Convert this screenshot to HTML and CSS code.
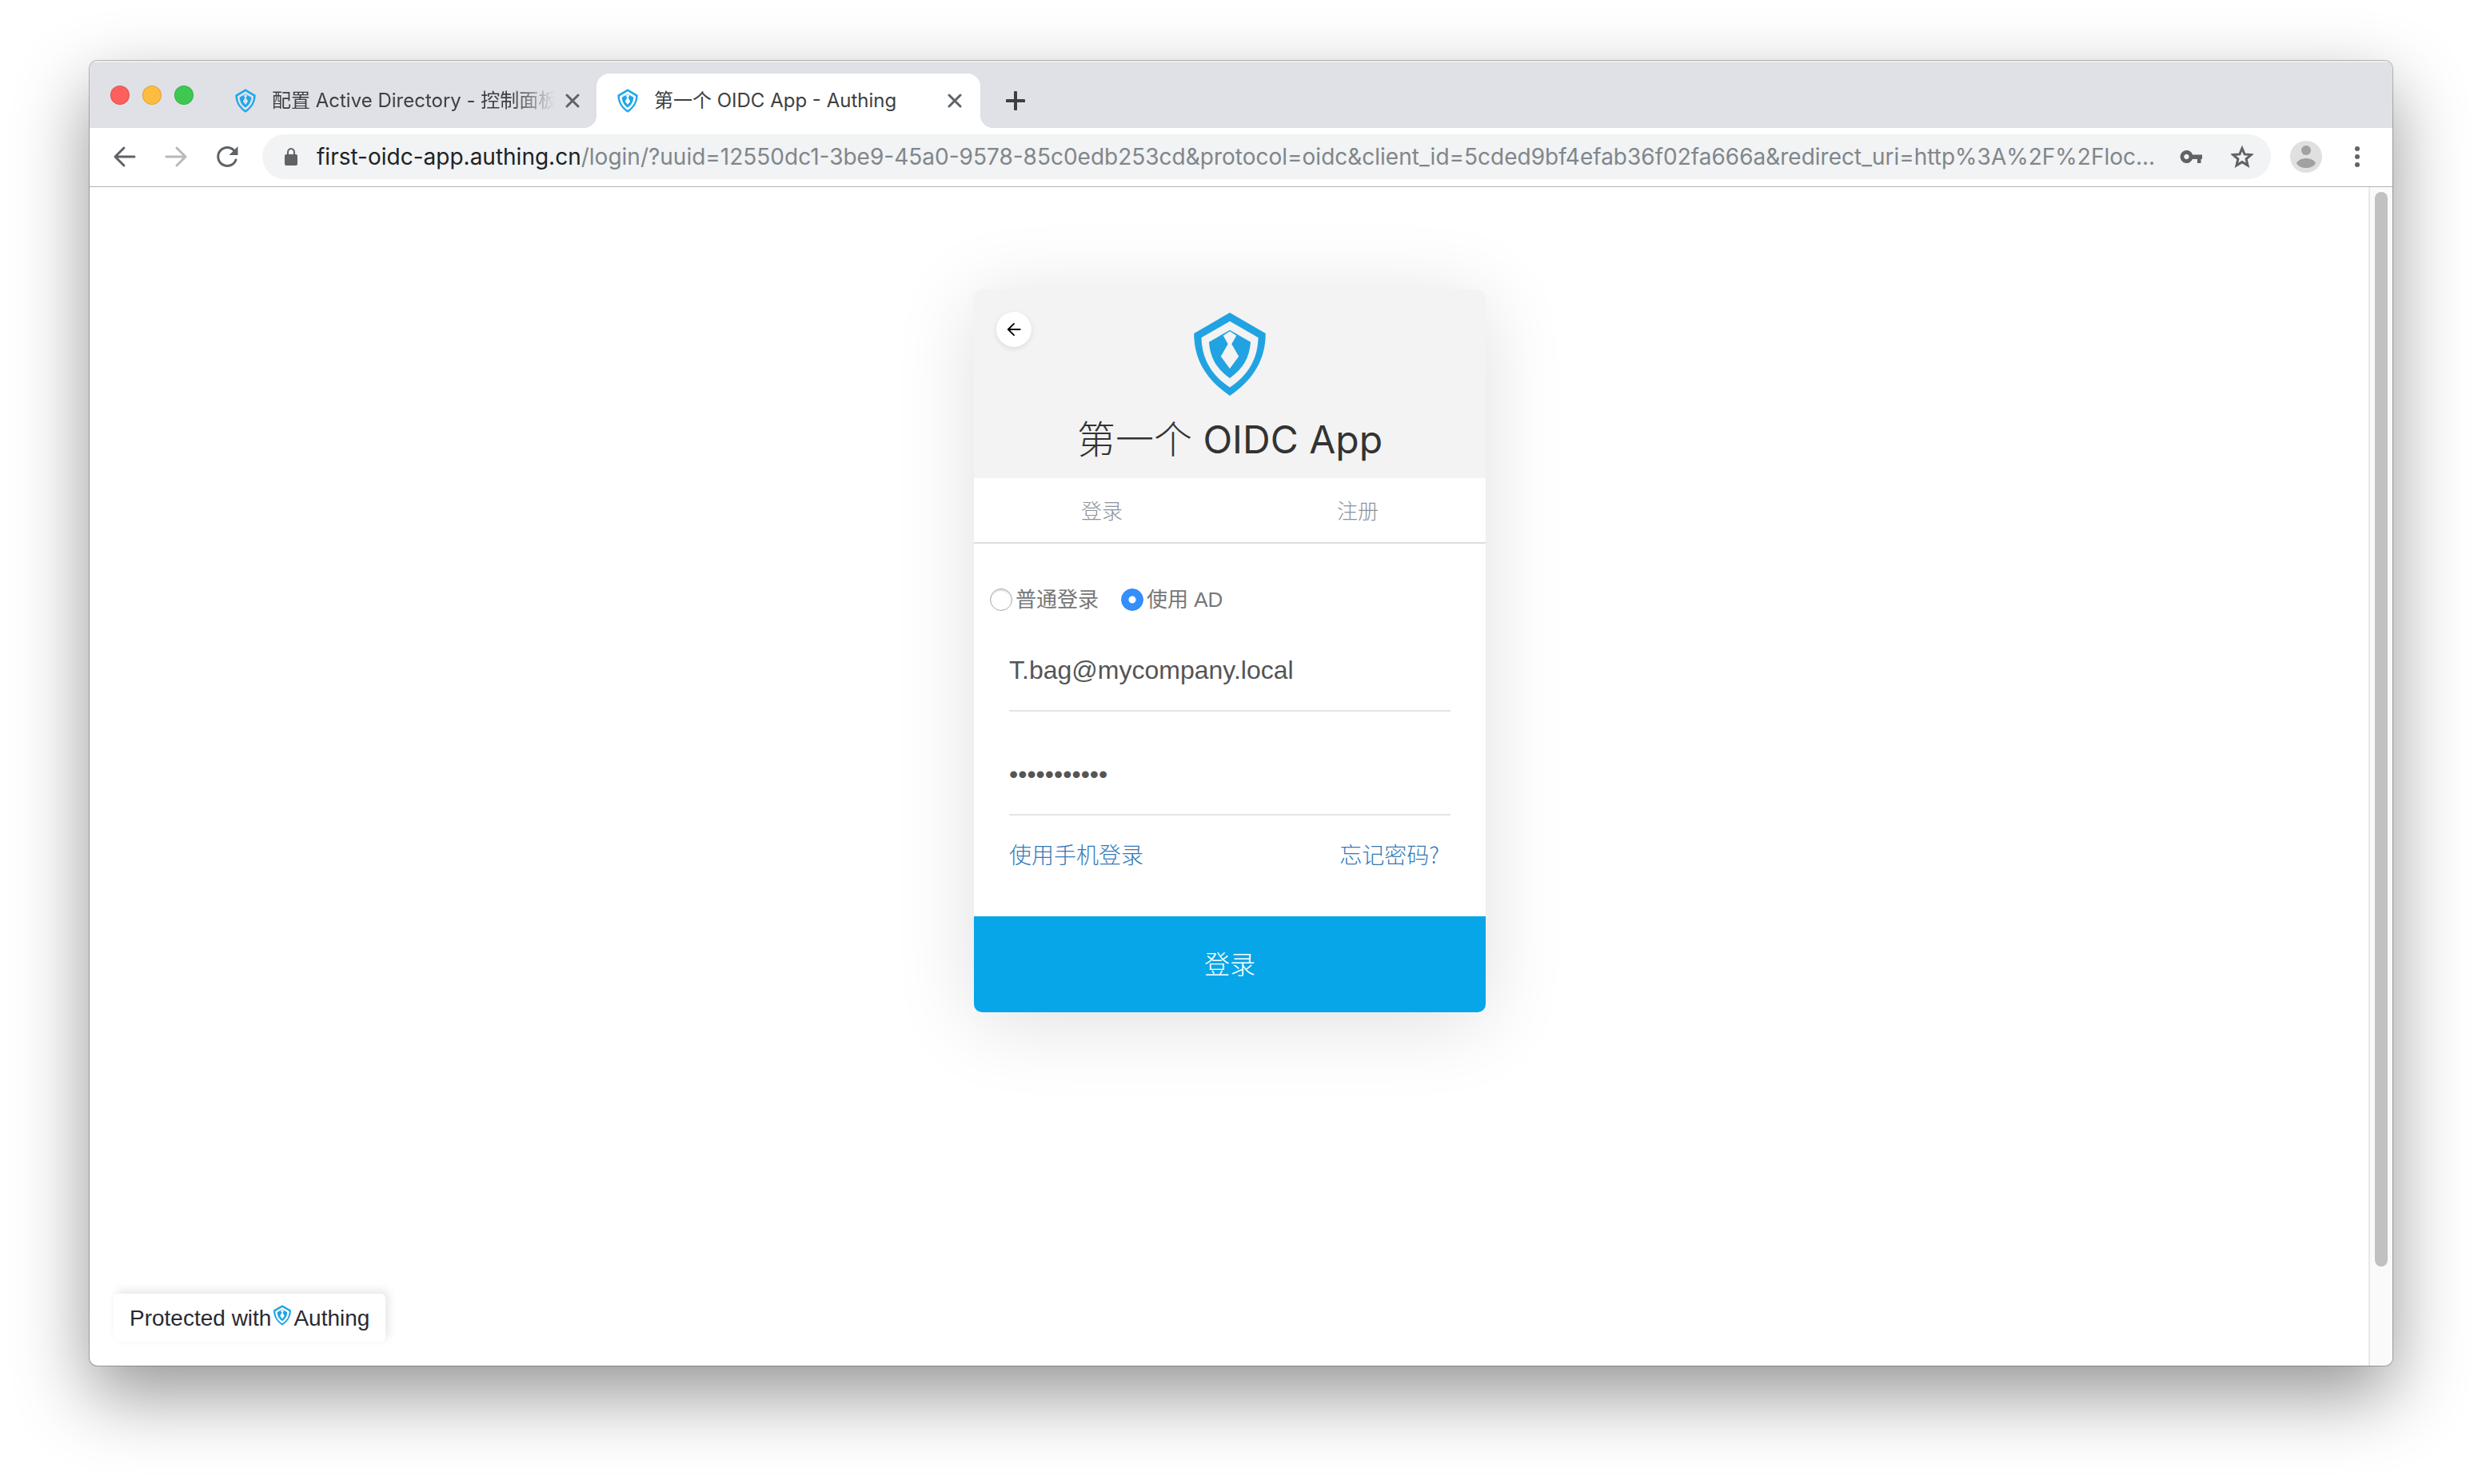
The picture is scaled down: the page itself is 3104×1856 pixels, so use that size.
FILE: index.html
```html
<!DOCTYPE html>
<html lang="zh-CN">
<head>
<meta charset="utf-8">
<title>第一个 OIDC App - Authing</title>
<link rel="stylesheet" href="styles.css">
</head>
<body>
<svg class="sprite" aria-hidden="true">
  <symbol id="shield" viewBox="60 28 278 322">
    <path fill-rule="evenodd" d="M199 31 335 110C335 210 288 286 199 347 110 286 63 210 63 110ZM199 64 91 126C93 206 128 268 199 315 270 268 305 206 307 126ZM199 97 278 143C274 202 250 244 199 280 148 244 124 202 120 143ZM199 102 174 118 192 150 165 197 199 244 233 197 206 150 224 118Z"/>
  </symbol>
</svg>
<div class="window">
  <header class="tabstrip">
    <div class="lights"><span class="light red"></span><span class="light amber"></span><span class="light green"></span></div>
    <div class="tab">
      <svg class="favicon"><use href="#shield"/></svg>
      <span class="tab-title faded">配置 Active Directory - 控制面板</span>
      <button class="tab-close" aria-label="关闭标签页"><svg viewBox="0 0 18 18"><path d="M2 2 16 16M16 2 2 16"/></svg></button>
    </div>
    <div class="tab active">
      <svg class="favicon"><use href="#shield"/></svg>
      <span class="tab-title">第一个 OIDC App - Authing</span>
      <button class="tab-close" aria-label="关闭标签页"><svg viewBox="0 0 18 18"><path d="M2 2 16 16M16 2 2 16"/></svg></button>
    </div>
    <button class="new-tab" aria-label="新标签页"><svg viewBox="0 0 24 24"><path d="M12 1.500V22.500M1.500 12H22.500"/></svg></button>
  </header>
  <nav class="toolbar">
    <button class="tool" aria-label="后退"><svg viewBox="0 0 32 32"><path d="M28 16H4.500M15 5 4 16 15 27"/></svg></button>
    <button class="tool dim" aria-label="前进"><svg viewBox="0 0 32 32"><path d="M4 16H27.500M17 5 28 16 17 27"/></svg></button>
    <button class="tool" aria-label="重新加载"><svg viewBox="0 0 32 32"><path d="M27 20A11.500 11.500 0 1 1 25 8.500"/><path class="solid" d="M29.500 3V14H18.500Z"/></svg></button>
    <div class="omnibox">
      <svg class="lock" viewBox="0 0 16 22"><path fill-rule="evenodd" d="M2 8H3V5.500A5 5.500 0 0 1 13 5.500V8H14A2 2 0 0 1 16 10V20A2 2 0 0 1 14 22H2A2 2 0 0 1 0 20V10A2 2 0 0 1 2 8ZM5 8H11V5.500A3 3.500 0 0 0 5 5.500Z"/></svg>
      <div class="url"><span class="host">first-oidc-app.authing.cn</span>/login/?uuid=12550dc1-3be9-45a0-9578-85c0edb253cd&amp;protocol=oidc&amp;client_id=5cded9bf4efab36f02fa666a&amp;redirect_uri=http%3A%2F%2Floc...</div>
      <div class="box-icons">
        <button class="key" aria-label="密码"><svg viewBox="0 0 28 28"><path fill-rule="evenodd" d="M8.500 6A8 8 0 1 0 16 17H22V22H26.500V17H28V11.500H16A8 8 0 0 0 8.500 6ZM8.500 10.800A3.200 3.200 0 1 1 8.400 10.800Z"/></svg></button>
        <button class="star" aria-label="收藏"><svg viewBox="0 0 28 28"><path d="M14 3.500 17.100 10.900 25.300 11.600 19.100 16.900 21 24.800 14 20.600 7 24.800 8.900 16.900 2.700 11.600 10.900 10.900Z"/></svg></button>
      </div>
    </div>
    <button class="avatar" aria-label="用户"><svg viewBox="0 0 40 40"><circle cx="20" cy="12" r="6"/><path d="M8 28C12 20 28 20 32 28 28 36 12 36 8 28Z"/></svg></button>
    <button class="menu" aria-label="菜单"><svg viewBox="0 0 8 28"><circle cx="4" cy="4" r="3"/><circle cx="4" cy="14" r="3"/><circle cx="4" cy="24" r="3"/></svg></button>
  </nav>
  <div class="viewport">
    <main class="page">
      <form class="card">
        <div class="card-head">
          <button type="button" class="back" aria-label="返回"><svg viewBox="0 0 20 20"><path d="M18.500 10H2.500M10 2 2 10 10 18"/></svg></button>
          <svg class="logo"><use href="#shield"/></svg>
          <h1>第一个 <span>OIDC App</span></h1>
        </div>
        <div class="card-tabs"><button type="button">登录</button><button type="button">注册</button></div>
        <div class="card-body">
          <div class="modes">
            <label><input type="radio" name="mode"><span>普通登录</span></label>
            <label><input type="radio" name="mode" checked><span>使用 AD</span></label>
          </div>
          <div class="fields">
            <input type="text" aria-label="帐号" value="T.bag@mycompany.local">
            <input type="password" aria-label="密码" value="mycompany12">
          </div>
          <div class="links"><a href="#phone">使用手机登录</a><a href="#forgot">忘记密码?</a></div>
        </div>
        <button type="submit" class="submit">登录</button>
      </form>
      <footer class="badge"><span>Protected with</span><svg><use href="#shield"/></svg><span>Authing</span></footer>
    </main>
    <div class="scrollbar"><div class="thumb"></div></div>
  </div>
</div>
</body>
</html>
```
FILE: styles.css
```css
* { box-sizing: border-box; }

body {
  margin: 0;
  min-height: 100vh;
  padding: 76px 112px 148px;
  display: flex;
  background: #fff;
  font-family: "Liberation Sans", "Noto Sans CJK SC", sans-serif;
}

button {
  margin: 0;
  padding: 0;
  border: 0;
  background: none;
  font: inherit;
  color: inherit;
}

svg { display: block; fill: none; stroke-linecap: round; stroke-linejoin: round; }
.sprite { position: absolute; width: 0; height: 0; }

/* Browser window */
.window {
  flex: 1;
  min-width: 0;
  display: flex;
  flex-direction: column;
  border-radius: 10px;
  overflow: hidden;
  background: #fff;
  box-shadow: 0 0 0 1px rgba(0, 0, 0, .25), 0 36px 92px rgba(0, 0, 0, .42);
}

.tabstrip {
  display: flex;
  height: 84px;
  padding: 16px 0 0 26px;
  background: #dfe1e6;
  box-shadow: inset 0 2px 0 #eceef0;
  font-family: Inter, "Noto Sans CJK SC", sans-serif;
  font-size: 24px;
  color: #3c4043;
}

.lights {
  display: flex;
  align-items: center;
  gap: 16px;
  height: 54px;
  margin-right: 26px;
}
.light { width: 24px; height: 24px; border-radius: 50%; border: 1px solid rgba(0, 0, 0, .12); }
.red { background: #fc605c; }
.amber { background: #fdbc40; }
.green { background: #3ec84f; }

.tab {
  position: relative;
  display: flex;
  align-items: center;
  width: 478px;
  padding: 0 18px 0 26px;
}
.tab.active { width: 480px; padding-right: 20px; background: #fff; border-radius: 16px 16px 0 0; }
.tab.active::before,
.tab.active::after {
  content: "";
  position: absolute;
  bottom: 0;
  width: 16px;
  height: 16px;
}
.tab.active::before { right: 100%; background: radial-gradient(circle at 0 0, transparent 16px, #fff 16px); }
.tab.active::after { left: 100%; background: radial-gradient(circle at 100% 0, transparent 16px, #fff 16px); }

.favicon { flex: none; width: 26px; height: 30px; margin-right: 20px; fill: #1fa7ea; }
.tab-title { flex: 1; overflow: hidden; white-space: nowrap; line-height: 36px; }
.faded { mask-image: linear-gradient(to right, #000 85%, transparent); }
.tab-close { flex: none; padding: 3px; margin-left: 10px; }
.tab-close svg { width: 18px; height: 18px; stroke: #5f6368; stroke-width: 3; }
.new-tab { padding: 0 32px; }
.new-tab svg { width: 24px; height: 24px; stroke: #3c4043; stroke-width: 4; }

.toolbar {
  display: flex;
  align-items: center;
  height: 74px;
  padding: 0 40px 2px 28px;
  border-bottom: 1px solid #b3b3b3;
}
.tool { width: 32px; margin-right: 32px; }
.tool svg { width: 32px; height: 32px; stroke: #5f6368; stroke-width: 3; }
.tool .solid { fill: #5f6368; stroke: none; }
.dim svg { stroke: #b7b9bc; }
.tool:nth-of-type(3) { margin-right: 28px; }

.omnibox {
  flex: 1;
  min-width: 0;
  display: flex;
  align-items: center;
  height: 56px;
  padding: 0 22px 0 28px;
  border-radius: 28px;
  background: #f1f3f4;
}
.lock { flex: none; width: 16px; height: 22px; margin-right: 24px; fill: #5f6368; }
.url {
  flex: 1;
  overflow: hidden;
  white-space: nowrap;
  font-family: Inter, sans-serif;
  font-size: 28px;
  line-height: 40px;
  color: #80868b;
}
.host { color: #202124; }
.box-icons { display: flex; gap: 36px; margin-left: 16px; }
.box-icons svg { width: 28px; height: 28px; }
.key svg { fill: #5f6368; }
.star svg { stroke: #5f6368; stroke-width: 3; stroke-linejoin: miter; }
.avatar { margin-left: 24px; border-radius: 50%; background: #e0e0e0; }
.avatar svg { width: 40px; height: 40px; fill: #a1a1a1; }
.menu { margin-left: 40px; }
.menu svg { width: 8px; height: 28px; fill: #5f6368; }

/* Page area */
.viewport { flex: 1; display: flex; }
.page {
  flex: 1;
  display: flex;
  flex-direction: column;
  align-items: center;
  padding: 128px 28px 30px 30px;
}
.scrollbar {
  display: flex;
  width: 30px;
  padding: 6px 6px 124px;
  border-left: 2px solid #e8e8e8;
  background: #fafafa;
}
.thumb { flex: 1; border-radius: 8px; background: #c1c1c1; }

/* Login card */
.card {
  width: 640px;
  border-radius: 10px;
  background: #fff;
  box-shadow: 0 12px 100px rgba(0, 0, 0, .13);
}
.card-head {
  position: relative;
  display: flex;
  flex-direction: column;
  align-items: center;
  height: 236px;
  padding-top: 28px;
  border-radius: 10px 10px 0 0;
  background: #f3f3f3;
}
.back {
  position: absolute;
  top: 28px;
  left: 28px;
  display: grid;
  place-items: center;
  width: 44px;
  height: 44px;
  border-radius: 50%;
  background: #fff;
  box-shadow: 0 2px 6px rgba(0, 0, 0, .1);
}
.back svg { width: 18px; height: 18px; stroke: #000; stroke-width: 2; }
.logo { width: 92px; height: 106px; fill: #21a3e2; }
h1 {
  margin: 22px 0 0;
  font-family: Inter, "Noto Sans CJK SC", sans-serif;
  font-size: 48px;
  font-weight: 300;
  line-height: 64px;
  color: #333;
}
h1 span { font-weight: 400; }

.card-tabs {
  display: grid;
  grid-template-columns: 1fr 1fr;
  height: 82px;
  border-bottom: 2px solid #ddd;
}
.card-tabs button { padding-bottom: 2px; font-size: 26px; font-weight: 300; color: #8d9299; }

.card-body { padding: 56px 44px; }
.modes {
  display: flex;
  align-items: center;
  gap: 28px;
  height: 28px;
  margin: 0 -24px 28px;
  font-size: 26px;
  color: #777;
}
.modes label { display: flex; align-items: center; gap: 4px; }
.modes span { padding-bottom: 6px; }
.modes input {
  appearance: none;
  width: 28px;
  height: 28px;
  margin: 0;
  border: 1px solid #a8a8a8;
  border-radius: 50%;
  background: #fff;
  box-shadow: inset 0 2px 2px rgba(0, 0, 0, .12);
}
.modes input:checked {
  border-color: #2f86f6;
  background: radial-gradient(circle, #fff 4px, #358ffb 5px);
  box-shadow: none;
}

.fields { display: flex; flex-direction: column; gap: 32px; }
.fields input {
  width: 100%;
  height: 98px;
  padding: 0 0 4px;
  border: 0;
  border-bottom: 2px solid #e4e4e4;
  outline: 0;
  background: none;
  font: 32px "Liberation Sans", sans-serif;
  color: #555;
}

.links {
  display: flex;
  justify-content: space-between;
  margin-top: 28px;
  padding: 0 14px 2px 0;
  font-family: "Noto Sans CJK SC", sans-serif;
  font-size: 28px;
  font-weight: 300;
  line-height: 40px;
}
.links a { color: #337ab7; text-decoration: none; }

.submit {
  display: block;
  width: 100%;
  height: 120px;
  padding-bottom: 4px;
  border-radius: 0 0 10px 10px;
  background: #07a6e8;
  font-size: 32px;
  font-weight: 300;
  color: #fff;
}

.badge {
  display: flex;
  align-items: center;
  align-self: flex-start;
  height: 60px;
  margin-top: auto;
  padding: 2px 20px 0;
  border-radius: 6px;
  background: #fff;
  box-shadow: 4px -4px 12px rgba(0, 0, 0, .1);
  font-size: 28px;
  color: #2a2a33;
}
.badge svg { width: 24px; height: 26px; margin: 0 2px 8px; fill: #21a3e2; }
```
